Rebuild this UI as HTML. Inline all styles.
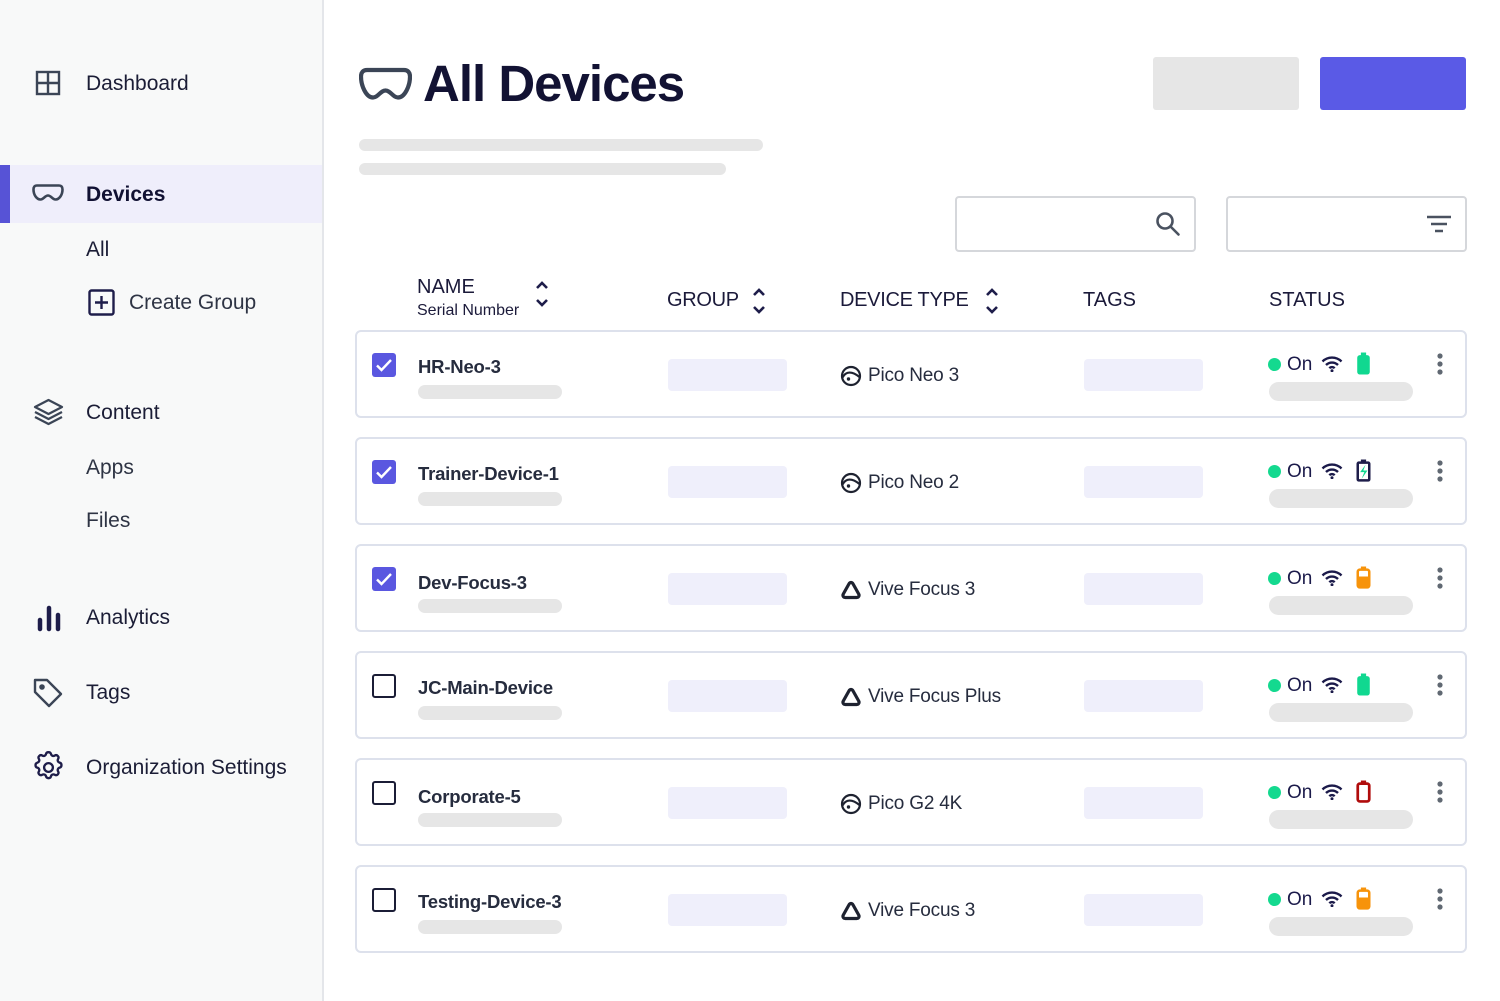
<!DOCTYPE html>
<html><head><meta charset="utf-8"><style>
*{margin:0;padding:0;box-sizing:border-box}
body{width:1500px;height:1001px;overflow:hidden;background:#fff;font-family:"Liberation Sans",Arial,sans-serif;color:#1b1a3a;position:relative}
.a{position:absolute}
#side{left:0;top:0;width:324px;height:1001px;background:#f8f9f9;border-right:2px solid #e4e6ea}
.nav{position:absolute;left:86px;font-size:21px;color:#1b1d36;line-height:24px;margin-top:1px}
.card{position:absolute;left:355px;width:1112px;height:88px;border:2px solid #dde1ec;border-radius:6px;background:#fff}
.card>*{position:absolute}
.cb{left:15px;top:21px;width:24px;height:24px;border-radius:3px}
.cb.on{background:#5a57e0}
.cb.off{border:2.5px solid #1b1d36;border-radius:3px}
.nm{left:61px;top:24px;font-size:18.5px;font-weight:bold;color:#262c3e;line-height:22px;letter-spacing:-0.2px}
.gb{left:61px;top:53px;width:144px;height:14px;border-radius:7px;background:#e6e6e6}
.pill{top:27px;width:119px;height:32px;background:#efeffb;border-radius:4px}
.dt{left:483px;top:32px;font-size:19px;color:#262c3e;line-height:24px;display:flex;align-items:center;letter-spacing:-0.2px}
.dt svg{margin-right:6px}
.dot{left:911px;top:26px;width:13px;height:13px;border-radius:50%;background:#14d98f}
.st{left:930px;top:22px;font-size:19px;color:#1b1a4a;line-height:22px}
.wf{left:964px;top:24px}
.bt{left:999px;top:20px}
.sb{left:912px;top:50px;width:144px;height:19px;border-radius:10px;background:#e6e6e6}
.kb{left:1079px;top:21px}
.hd{position:absolute;font-size:20px;color:#1b1a3a;line-height:24px}
</style></head><body>
<div id="side" class="a"></div>
<svg class="a" style="left:35px;top:70px" width="26" height="26" viewBox="0 0 26 26" fill="none" stroke="#3b4556" stroke-width="2.4"><rect x="2" y="2" width="22" height="22"/><path d="M13 2v22M2 13h22"/></svg>
<div class="nav" style="top:71px">Dashboard</div>
<div class="a" style="left:0;top:165px;width:322px;height:58px;background:#efeefb"></div>
<div class="a" style="left:0;top:165px;width:10px;height:58px;background:#5753d6"></div>
<svg class="a" style="left:32px;top:183px" width="32" height="22" viewBox="0 0 32 22" fill="none" stroke="#3b4556" stroke-width="2.6"><path d="M5 2.5h22c2.5 0 3.5 1.5 3.5 4 0 5-3 10-7 10-3 0-4.5-4-7.5-4s-4.5 4-7.5 4c-4 0-7-5-7-10 0-2.5 1-4 3.5-4z"/></svg>
<div class="nav" style="top:182px;font-weight:bold;color:#111133">Devices</div>
<div class="nav" style="top:237px">All</div>
<svg class="a" style="left:88px;top:289px" width="27" height="27" viewBox="0 0 27 27" fill="none" stroke="#1e1d4a" stroke-width="2.4"><rect x="1.5" y="1.5" width="24" height="24" rx="2"/><path d="M13.5 7v13M7 13.5h13"/></svg>
<div class="nav" style="left:129px;top:290px;color:#2e3444">Create Group</div>
<svg class="a" style="left:33px;top:398px" width="31" height="28" viewBox="0 0 31 28" fill="none" stroke="#3b4556" stroke-width="2.3" stroke-linejoin="round"><path d="M15.5 2L29 9l-13.5 7L2 9z"/><path d="M2 14l13.5 7L29 14"/><path d="M2 19l13.5 7L29 19"/></svg>
<div class="nav" style="top:400px">Content</div>
<div class="nav" style="top:455px;color:#2e3444">Apps</div>
<div class="nav" style="top:508px;color:#2e3444">Files</div>
<svg class="a" style="left:37px;top:604px" width="24" height="28" viewBox="0 0 24 28" stroke="#1e1d4a" stroke-width="4.5" stroke-linecap="round"><path d="M3 16v9M12 4v21M21 11v14"/></svg>
<div class="nav" style="top:605px">Analytics</div>
<svg class="a" style="left:32px;top:677px" width="32" height="32" viewBox="0 0 32 32" fill="none" stroke="#3b4556" stroke-width="2.4" stroke-linejoin="round"><path d="M3 3h12l14 14-12 12L3 15z"/><circle cx="10" cy="10" r="1.6" fill="#3b4556"/></svg>
<div class="nav" style="top:680px">Tags</div>
<svg class="a" style="left:31px;top:750px" width="35" height="35" viewBox="0 0 24 24" fill="none" stroke="#1e1d4a" stroke-width="1.6"><path d="M10.3 2.7c.4-1.6 2.9-1.6 3.4 0a1.7 1.7 0 002.6 1.1c1.5-.9 3.2.8 2.3 2.3a1.7 1.7 0 001.1 2.6c1.6.4 1.6 2.9 0 3.4a1.7 1.7 0 00-1.1 2.6c.9 1.5-.8 3.2-2.3 2.3a1.7 1.7 0 00-2.6 1.1c-.4 1.6-2.9 1.6-3.4 0a1.7 1.7 0 00-2.6-1.1c-1.5.9-3.2-.8-2.3-2.3a1.7 1.7 0 00-1.1-2.6c-1.6-.4-1.6-2.9 0-3.4a1.7 1.7 0 001.1-2.6c-.9-1.5.8-3.2 2.3-2.3a1.7 1.7 0 002.6-1.1z"/><circle cx="12" cy="12" r="3"/></svg>
<div class="nav" style="top:755px">Organization Settings</div>

<svg class="a" style="left:359px;top:67px" width="53" height="35" viewBox="0 0 53 35" fill="none" stroke="#3b4556" stroke-width="4.2"><path d="M8 3h37c4 0 6 2.5 6 6.5 0 9-5 21-12 21-5 0-7.5-7-12.5-7s-7.5 7-12.5 7c-7 0-12-12-12-21C2 5.5 4 3 8 3z"/></svg>
<div class="a" style="left:423px;top:53px;font-size:51px;font-weight:bold;color:#121233;line-height:62px;letter-spacing:-1px">All Devices</div>
<div class="a" style="left:1153px;top:57px;width:146px;height:53px;background:#e6e6e6;border-radius:3px"></div>
<div class="a" style="left:1320px;top:57px;width:146px;height:53px;background:#5a5ae6;border-radius:3px"></div>
<div class="a" style="left:359px;top:139px;width:404px;height:12px;background:#e6e6e6;border-radius:6px"></div>
<div class="a" style="left:359px;top:163px;width:367px;height:12px;background:#e6e6e6;border-radius:6px"></div>
<div class="a" style="left:955px;top:196px;width:241px;height:56px;border:2px solid #d5d7db;border-radius:4px"></div>
<svg class="a" style="left:1154px;top:210px" width="28" height="28" viewBox="0 0 28 28" fill="none" stroke="#4a5260" stroke-width="2.6" stroke-linecap="round"><circle cx="11" cy="11" r="7.5"/><path d="M16.5 16.5l8 8"/></svg>
<div class="a" style="left:1226px;top:196px;width:241px;height:56px;border:2px solid #d5d7db;border-radius:4px"></div>
<svg class="a" style="left:1425px;top:214px" width="28" height="20" viewBox="0 0 28 20" stroke="#4a5260" stroke-width="2.4"><path d="M2 3h24M6 10h16M10 17h8"/></svg>

<div class="hd" style="left:417px;top:275px">NAME</div>
<div class="a" style="left:417px;top:302px;font-size:16px;color:#1b1a3a">Serial Number</div>
<svg class="a" style="left:535px;top:280px" width="14" height="28" viewBox="0 0 14 28" fill="none" stroke="#1e1d4a" stroke-width="2.6"><path d="M2 8l5-5 5 5M2 20l5 5 5-5"/></svg>
<div class="hd" style="left:667px;top:288px;letter-spacing:-0.3px">GROUP</div>
<svg class="a" style="left:752px;top:287px" width="14" height="28" viewBox="0 0 14 28" fill="none" stroke="#1e1d4a" stroke-width="2.6"><path d="M2 8l5-5 5 5M2 20l5 5 5-5"/></svg>
<div class="hd" style="left:840px;top:288px;letter-spacing:-0.3px">DEVICE TYPE</div>
<svg class="a" style="left:985px;top:287px" width="14" height="28" viewBox="0 0 14 28" fill="none" stroke="#1e1d4a" stroke-width="2.6"><path d="M2 8l5-5 5 5M2 20l5 5 5-5"/></svg>
<div class="hd" style="left:1083px;top:288px">TAGS</div>
<div class="hd" style="left:1269px;top:288px">STATUS</div>

<svg width="0" height="0" style="position:absolute">
<defs>
<symbol id="chk" viewBox="0 0 24 24"><path d="M5 12.5l4.5 4.5L19 7" fill="none" stroke="#fff" stroke-width="2.4"/></symbol>
<symbol id="pico" viewBox="0 0 22 22"><circle cx="11" cy="11" r="9" fill="none" stroke="#1e2230" stroke-width="2.2"/><path d="M2.5 12.5C6 6 12 6 19.5 12" fill="none" stroke="#1e2230" stroke-width="2.2"/><circle cx="8.5" cy="14" r="1.7" fill="#1e2230"/></symbol>
<symbol id="vive" viewBox="0 0 22 22"><path d="M11 3.5c1 0 1.6.6 2.1 1.5l5.6 10c.9 1.7-.1 3.5-2 3.5H5.3c-1.9 0-2.9-1.8-2-3.5l5.6-10c.5-.9 1.1-1.5 2.1-1.5z" fill="none" stroke="#1e2230" stroke-width="3.2"/></symbol>
<symbol id="wifi" viewBox="0 0 22 16"><path d="M1.5 5.5a13.5 13.5 0 0119 0M5 9a8.5 8.5 0 0112 0M8.3 12.2a3.8 3.8 0 015.4 0" fill="none" stroke="#1b1a4a" stroke-width="2.4"/><circle cx="11" cy="14.8" r="1.5" fill="#1b1a4a"/></symbol>
<symbol id="kb" viewBox="0 0 8 22"><circle cx="4" cy="3" r="2.6" fill="#606872"/><circle cx="4" cy="11" r="2.6" fill="#606872"/><circle cx="4" cy="19" r="2.6" fill="#606872"/></symbol>
<symbol id="bg" viewBox="0 0 14 22"><rect x="4.5" y="0.5" width="5" height="3" fill="#10d890"/><rect x="1" y="3" width="12" height="18.5" rx="2.5" fill="#10d890"/></symbol>
<symbol id="bc" viewBox="0 0 14 22"><rect x="4.5" y="0.5" width="5" height="3" fill="#1e1d4a"/><rect x="1.5" y="3.5" width="11" height="17" rx="1" fill="none" stroke="#1e1d4a" stroke-width="2.4"/><path d="M9 5.5L3.8 12.5h4l-2.6 6.5 5.6-8h-4z" fill="#10d890"/></symbol>
<symbol id="bo" viewBox="0 0 14 22"><rect x="4.5" y="0.5" width="5" height="3" fill="#f7930a"/><rect x="1.5" y="3.5" width="11" height="17" rx="2" fill="none" stroke="#f7930a" stroke-width="2.4"/><rect x="1.5" y="10" width="11" height="10.5" rx="1.5" fill="#f7930a"/></symbol>
<symbol id="br" viewBox="0 0 14 22"><rect x="4.5" y="0.5" width="5" height="3" fill="#b00c0c"/><rect x="1.5" y="3.5" width="11" height="17" rx="2" fill="none" stroke="#b00c0c" stroke-width="2.6"/></symbol>
</defs></svg>

<div class="card" style="top:330px">
<div class="cb on"><svg width="24" height="24"><use href="#chk"/></svg></div>
<div class="nm">HR-Neo-3</div><div class="gb"></div>
<div class="pill" style="left:311px"></div>
<div class="dt"><svg width="22" height="22"><use href="#pico"/></svg>Pico Neo 3</div>
<div class="pill" style="left:727px"></div>
<div class="dot"></div><div class="st">On</div>
<svg class="wf" width="22" height="16"><use href="#wifi"/></svg>
<svg class="bt" width="15" height="23"><use href="#bg"/></svg>
<div class="sb"></div><svg class="kb" width="8" height="22"><use href="#kb"/></svg>
</div>

<div class="card" style="top:437px">
<div class="cb on"><svg width="24" height="24"><use href="#chk"/></svg></div>
<div class="nm">Trainer-Device-1</div><div class="gb"></div>
<div class="pill" style="left:311px"></div>
<div class="dt"><svg width="22" height="22"><use href="#pico"/></svg>Pico Neo 2</div>
<div class="pill" style="left:727px"></div>
<div class="dot"></div><div class="st">On</div>
<svg class="wf" width="22" height="16"><use href="#wifi"/></svg>
<svg class="bt" width="15" height="23"><use href="#bc"/></svg>
<div class="sb"></div><svg class="kb" width="8" height="22"><use href="#kb"/></svg>
</div>

<div class="card" style="top:544px">
<div class="cb on"><svg width="24" height="24"><use href="#chk"/></svg></div>
<div class="nm" style="top:26px">Dev-Focus-3</div><div class="gb"></div>
<div class="pill" style="left:311px"></div>
<div class="dt"><svg width="22" height="22"><use href="#vive"/></svg>Vive Focus 3</div>
<div class="pill" style="left:727px"></div>
<div class="dot"></div><div class="st">On</div>
<svg class="wf" width="22" height="16"><use href="#wifi"/></svg>
<svg class="bt" width="15" height="23"><use href="#bo"/></svg>
<div class="sb"></div><svg class="kb" width="8" height="22"><use href="#kb"/></svg>
</div>

<div class="card" style="top:651px">
<div class="cb off"></div>
<div class="nm">JC-Main-Device</div><div class="gb"></div>
<div class="pill" style="left:311px"></div>
<div class="dt"><svg width="22" height="22"><use href="#vive"/></svg>Vive Focus Plus</div>
<div class="pill" style="left:727px"></div>
<div class="dot"></div><div class="st">On</div>
<svg class="wf" width="22" height="16"><use href="#wifi"/></svg>
<svg class="bt" width="15" height="23"><use href="#bg"/></svg>
<div class="sb"></div><svg class="kb" width="8" height="22"><use href="#kb"/></svg>
</div>

<div class="card" style="top:758px">
<div class="cb off"></div>
<div class="nm" style="top:26px">Corporate-5</div><div class="gb"></div>
<div class="pill" style="left:311px"></div>
<div class="dt"><svg width="22" height="22"><use href="#pico"/></svg>Pico G2 4K</div>
<div class="pill" style="left:727px"></div>
<div class="dot"></div><div class="st">On</div>
<svg class="wf" width="22" height="16"><use href="#wifi"/></svg>
<svg class="bt" width="15" height="23"><use href="#br"/></svg>
<div class="sb"></div><svg class="kb" width="8" height="22"><use href="#kb"/></svg>
</div>

<div class="card" style="top:865px">
<div class="cb off"></div>
<div class="nm">Testing-Device-3</div><div class="gb"></div>
<div class="pill" style="left:311px"></div>
<div class="dt"><svg width="22" height="22"><use href="#vive"/></svg>Vive Focus 3</div>
<div class="pill" style="left:727px"></div>
<div class="dot"></div><div class="st">On</div>
<svg class="wf" width="22" height="16"><use href="#wifi"/></svg>
<svg class="bt" width="15" height="23"><use href="#bo"/></svg>
<div class="sb"></div><svg class="kb" width="8" height="22"><use href="#kb"/></svg>
</div>
</body></html>
